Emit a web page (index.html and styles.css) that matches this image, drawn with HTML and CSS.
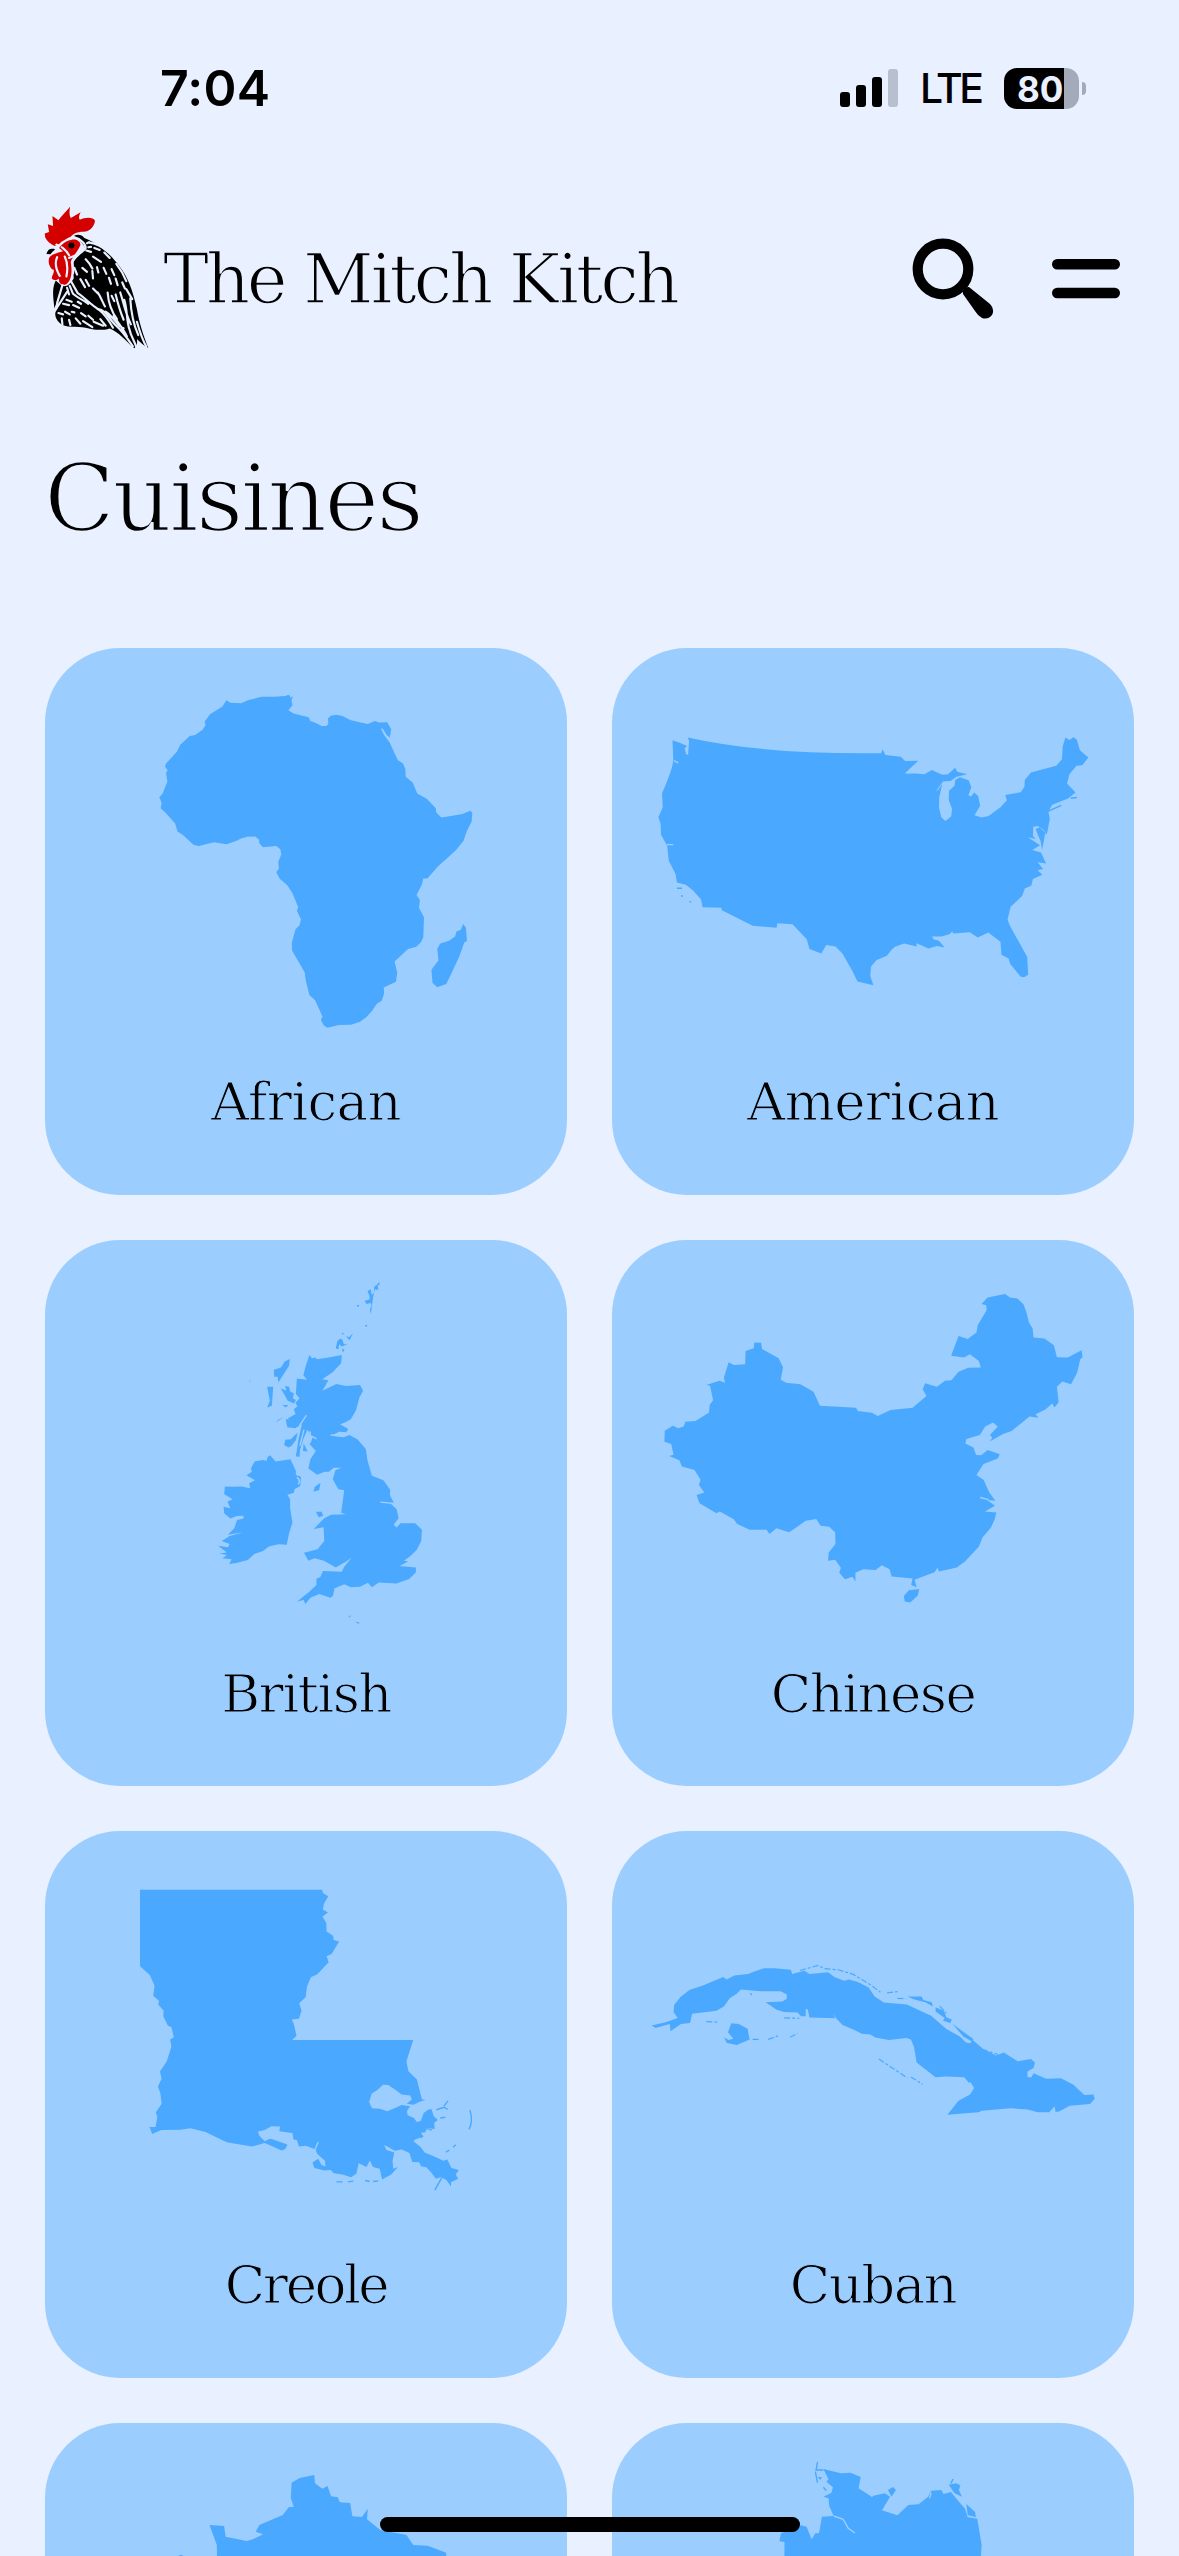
FILE: index.html
```html
<!DOCTYPE html>
<html lang="en">
<head>
<meta charset="utf-8">
<title>The Mitch Kitch</title>
<link rel="stylesheet" href="styles.css">
</head>
<body>
<div class="status">
  <span class="time">7:04</span>
  <div class="indicators">
    <svg class="signal" viewBox="0 0 58 38"><rect y="23" width="10" height="15" rx="3"/><rect x="16" y="16" width="10" height="22" rx="3"/><rect x="32" y="8" width="10" height="30" rx="3"/><rect class="dim" x="48" width="10" height="38" rx="3"/></svg>
    <span class="network">LTE</span>
    <div class="battery"><span class="charge">80</span><span class="nub"></span></div>
  </div>
</div>
<header class="header">
  <a class="brand">
    <svg class="logo" viewBox="43 52 315 430">
      <path class="red" d="M75 172C60 166 52 158 46 146L45 135L58 130L54 107L70 112L68 82L86 95C94 82 108 70 121 54C119 68 118 78 123 88C132 84 142 76 153 71C148 80 146 87 150 93C164 86 190 83 196 96C194 112 184 124 168 129C148 130 134 132 124 144C112 150 96 158 88 166Z"/>
      <path class="red" d="M88 178C96 166 110 156 124 154C138 150 154 158 152 170C146 184 136 196 128 210C124 216 122 220 124 226C128 254 124 280 108 288C96 292 86 284 88 270C84 274 74 278 66 270C66 260 74 254 72 244C60 240 54 222 58 208C64 198 76 196 86 192L100 188Z"/>
      <path d="M50 196C54 184 60 178 76 182C70 188 66 192 62 197Z"/>
      <path d="M132 142C144 136 156 138 164 148C214 168 246 202 270 234C294 264 310 306 322 362C328 400 342 444 356 478C344 474 332 462 322 452C324 462 322 474 314 480C290 458 266 430 240 420C216 428 188 424 168 418C142 414 106 420 90 404C76 392 72 374 82 362C90 340 82 330 74 360C70 324 66 300 78 276L96 292C110 296 120 290 132 270L130 222C140 206 158 194 166 180C162 166 150 154 132 142Z"/>
      <circle cx="125" cy="171" r="9"/>
      <g class="feather">
        <path d="M128 144C150 150 168 164 168 178C162 190 140 196 130 216C126 224 132 238 130 254"/>
        <path d="M80 168L84 170M96 176C106 184 112 188 118 200M82 206C76 220 78 242 90 262M105 204C114 222 114 244 110 264"/>
        <path d="M162 174C154 194 132 204 118 208M172 164L178 161M176 176L184 175"/>
        <path d="M180 162C200 164 218 174 236 190M194 178L210 184M170 186L184 190M190 204L214 220M168 212C176 220 182 226 188 240M224 192L240 208M222 238L230 256M246 242L254 260M260 226C274 244 284 262 290 278M134 238L142 258M158 238L172 250M188 248L190 270M202 236L206 252M258 270L264 290M278 282L286 300M238 268L244 286M152 272L166 296M168 274L178 292"/>
        <path d="M124 278L144 314C166 328 184 350 208 364C228 380 240 400 250 418M120 292L130 316C148 332 158 332 176 346M112 298L118 318M98 290L82 344M112 310L76 366"/>
        <path d="M190 300L208 318M204 312C214 326 218 340 226 354M234 312C236 342 242 364 262 392M246 322L254 338M258 318C266 350 272 370 282 394M272 312C284 350 288 376 304 408M290 302L308 332M302 330C304 366 308 400 326 440M284 334C294 364 290 398 300 424C304 444 314 456 320 476"/>
        <path d="M204 362C228 362 236 392 262 414C280 430 292 448 310 474M228 370C254 386 260 412 282 420M252 382C268 408 280 420 292 444M322 400C330 428 338 454 350 474"/>
        <path d="M110 334L126 340M100 346L118 350M130 350L148 358M86 374L100 378M106 370L120 378M126 370L134 372M96 390L98 408M118 394L122 410M138 390L152 406M154 374L168 384M160 398L188 416M176 382L190 394M192 400L220 412M212 392L228 412M144 340L154 346"/>
      </g>
    </svg>
    <span class="name">The Mitch Kitch</span>
  </a>
  <div class="tools">
    <svg class="search" viewBox="0 0 82 82"><circle cx="31" cy="31" r="25.3"/><path d="M51 56Q50 49 57 49L78 66Q83 71 80 77Q76 82 70 80Q66 78 63 73Z"/></svg>
    <svg class="menu" viewBox="0 0 68 40"><rect width="68" height="10.5" rx="5.2"/><rect y="28.7" width="68" height="10.5" rx="5.2"/></svg>
  </div>
</header>
<h1 class="title">Cuisines</h1>
<main class="grid">
  <a class="card"><svg class="map" viewBox="0 22.4 1544 1176" preserveAspectRatio="none"><path d="M537 169L548 176L580 177L600 169L640 159L680 159L710 157L722 153L727 162L734 157L729 170L732 183L720 197L735 206L780 216L785 227L800 232L818 241L832 241L838 235L837 220L845 212L862 209L880 213L903 224L930 230L955 235L975 227L988 231L1012 230L1018 240L1024 250L1020 273L1010 265L998 247L994 249L1003 266L1020 288L1034 317L1044 337L1059 346L1066 362L1067 383L1088 400L1101 430L1130 445L1156 471L1157 482L1172 497L1205 492L1235 487L1258 478L1264 484L1262 508L1247 537L1238 562L1216 588L1195 606L1162 634L1131 668L1119 668L1115 684L1099 714L1109 728L1106 750L1121 776L1119 832L1112 846L1098 859L1074 865L1034 900L1042 932L1038 957L1002 973L1003 990L996 1010L981 1019L967 1039L950 1056L932 1069L905 1077L870 1078L835 1086L824 1079L816 1063L821 1055L799 1009L782 994L772 956L768 930L731 870L730 848L741 810L753 799L757 782L745 758L749 748L732 709L716 686L695 669L684 650L692 640L690 621L699 600L696 586L684 577L645 580L634 569L633 559L622 550L598 551L580 556L565 563L537 572L500 566L455 577L440 574L408 546L392 536L385 514L358 485L342 471L345 456L338 440L348 430L362 396L358 372L363 365L355 355L358 346L390 313L400 293L428 269L444 266L466 251L475 239L472 229L488 208L524 187Z"/><path d="M1237 795L1245 806L1248 843L1240 847L1226 885L1201 936L1187 963L1160 972L1146 960L1143 923L1164 897L1160 865L1169 850L1195 842L1213 830L1217 816L1230 811Z"/></svg><span class="label wide">African</span></a>
  <a class="card"><svg class="map" viewBox="21 22.4 1544 1176" preserveAspectRatio="none"><path d="M200 281L225 289L243 297L236 303L240 320L232 317L246 321L249 283L245 273Q470 321 817 317L821 306L830 322L875 327L888 339L927 338L887 374L920 374L945 376L967 364L998 377L1015 376L1036 358L1042 369L1072 376L1040 383L1022 395L1000 396L978 425L987 418L998 402L989 440L988 468L995 496L1007 507L1024 494L1027 473L1017 448L1018 422L1034 408L1036 392L1050 384L1076 393L1084 412L1075 435L1083 438L1092 427L1104 437L1110 464L1093 491L1114 497L1135 493L1170 468L1189 449L1184 434L1230 426L1241 411L1242 392L1260 371L1335 352L1352 334L1354 298L1362 273L1374 280L1386 272L1396 279L1405 309L1430 329L1412 351L1395 352L1374 376L1367 402L1392 427L1370 444L1323 461L1312 481L1316 501L1307 545L1299 533L1281 521L1267 523L1266 548L1274 557L1251 552L1287 575L1264 588L1290 595L1305 626L1280 622L1296 641L1280 645L1294 657L1266 669L1261 688L1242 696L1234 717L1200 747L1191 783L1198 800L1223 843L1249 887L1252 937L1240 944L1230 943L1199 907L1194 892L1173 881L1170 845L1134 819L1103 833L1079 818L1031 822L1027 816L1019 824L995 830L968 830L972 838L988 842L1005 861L982 857L957 864L922 849L922 858L885 850L858 859L848 867L834 884L804 896L787 914L785 940L794 967L747 956L732 927L702 877L682 858L655 854L640 878L605 865L597 838L555 796L510 793L508 806L437 800L346 757L344 750L289 748L284 726L260 701L239 685L213 679L209 655L189 618L184 576L166 545L165 515L158 496L171 469L169 429Q205 352 202 330Z"/><path class="cut" d="M892 374L954 334L943 345L973 349L930 370Z"/><path d="M1274 530L1285 524L1303 538L1293 588L1289 564Z"/><path class="line" d="M1310 480L1350 463M1378 443L1396 441"/><path class="hair" d="M183 573L202 573M204 338L217 344"/><path class="line" d="M213 695h15M225 717h6M250 733h5"/></svg><span class="label wide">American</span></a>
  <a class="card"><svg class="map" viewBox="0 14 1544 1176" preserveAspectRatio="none"><path d="M782 336L790 345L800 343L804 348L835 344L878 336L876 359L850 385L820 404L838 407L828 424L820 436L862 417L890 423L932 420L941 436L930 455L920 491L905 515L889 524L873 530L897 543L891 552L870 551L846 562L884 566L900 560L924 572L949 599L954 632L967 674L1001 687L1021 713L1020 728L1034 754L1020 750L1040 768L1046 793L1031 811L1040 819L1052 807L1095 807L1115 825L1113 857L1099 882L1082 898L1062 912L1074 914L1049 927L1097 931L1097 944L1077 963L1040 976L987 973L967 986L955 974L932 985L905 986L885 978L856 990L852 1010L844 1016L811 1005L785 1016L770 1033L765 1022L746 1026L780 1000L803 980L803 962L814 958L822 941L878 943L884 930L907 903L891 914L860 931L825 912L797 905L779 912L766 890L806 880L826 857L824 818L795 823L825 794L846 783L890 782L876 778L885 715L868 712L851 684L859 659L877 652L854 652L840 663L827 663L805 671L779 654L785 628L801 605L783 586L788 577L792 566L776 545L764 571L754 603L753 621L742 620L750 571L760 530L740 541L716 538L730 523L718 514L741 501L736 488L746 480L741 470L753 457L742 445L745 402L775 405L764 393L772 364Z"/><path d="M666 617L682 634L726 628L742 660L742 672L757 677L755 703L738 712L736 722L717 727L725 740L725 765L732 805L722 835L715 867L690 866L662 872L645 885L619 893L600 910L569 918L545 921L552 908L525 905L538 896L516 892L538 889L512 870L541 874L546 865L523 857L546 843L587 832L541 839L560 821L568 798L587 794L587 786L568 787L548 794L530 779L528 761L548 765L540 746L555 740L530 726L532 704L555 705L582 704L607 709L604 695L621 687L596 673L612 663L609 653L620 634L644 630L656 632L658 622Z"/><path d="M724 347L722 366L690 413L688 397L678 397L677 377L698 371L709 354ZM657 425L675 425L671 478L657 483L665 464ZM697 429L714 436L710 423L722 425L725 438L736 443L733 457L742 462L737 472L718 464L710 450ZM684 524L708 509L689 518ZM712 515L735 519L741 533L716 537ZM748 552L742 575L729 591L720 595L707 588L711 573L727 572ZM765 583L777 606L763 605ZM815 694L811 714L794 719L798 705ZM801 775L818 775L823 786L810 790ZM990 131L989 141L984 140L986 154L977 152L973 161L968 191L964 221L961 210L966 196L962 190L952 194L945 185L960 180L960 172L954 157L964 152L966 168L973 161L974 144L980 141ZM874 290L880 294L884 306L895 306L878 312L870 306L868 320L860 318L865 296ZM879 273l7 5l-8 0zM891 282l8 4l12-11l-10 20l-6-6zM878 317l8 5l-5 7zM896 1070l9-6l-3 6zM917 1083l12 1l0 5zM702 475l18 2l-8 6zM604 408h3v3h-3zM923 196h6v4h-6zM947 252h6v4h-6z"/><path class="hair" d="M992 748L1034 752M773 505L754 532L748 560M766 545L754 590M784 550L786 572M803 571L790 564M845 560L884 563M745 678q12 10 4 20"/></svg><span class="label">British</span></a>
  <a class="card"><svg class="map" viewBox="21 14 1544 1176" preserveAspectRatio="none"><path d="M1184 165L1198 175L1220 178L1238 194L1247 216L1254 244L1265 262L1268 287L1300 290L1328 309L1337 342L1369 343L1410 323L1413 342L1406 348L1397 385L1379 418L1353 410L1337 425L1342 468L1330 483L1323 472L1304 488L1274 502L1282 512L1256 508L1203 549L1178 557L1138 578L1146 568L1139 560L1162 536L1148 525L1125 536L1109 560L1069 571L1066 584L1090 595L1098 616L1113 617L1132 602L1168 614L1162 626L1120 641L1099 672L1120 685L1137 721L1155 744L1130 742L1154 758L1124 774L1158 777L1153 796L1142 819L1117 847L1106 873L1065 914L1041 931L988 942L984 932L975 944L916 965L922 986L906 980L910 962L848 956L842 936L819 925L801 938L764 936L741 946L741 970L732 957L710 964L693 946L698 932L681 909L660 912L662 889L682 865L681 832L663 817L638 814L625 795L594 800L570 816L545 832L507 821L487 837L478 825L428 825L391 809L381 796L340 774L330 779L280 751L271 728L294 721L278 700L283 685L265 658L228 648L220 631L190 619L203 615L196 585L176 579L177 548L201 534L217 541L233 536L238 523L268 521L308 497L310 475L320 463L311 422L300 420L339 408L355 414L352 399L366 356L381 364L415 362L416 325L440 317L442 301L462 302L465 319L514 345L527 370L520 405L536 414L578 418L617 439L636 478L743 484L748 493L790 498L807 507L845 490L910 484L951 451L940 432L947 415L982 425L1006 408L1025 407L1046 383L1075 372L1112 371L1106 353L1080 334L1062 343L1024 338L1046 283L1073 291L1099 273L1103 252L1129 211L1128 197L1114 193L1132 175Z"/><path d="M899 995L930 991L925 1010L903 1029L887 1026L884 1011Z"/><path class="hair" d="M1110 735L1135 741"/></svg><span class="label">Chinese</span></a>
  <a class="card"><svg class="map" viewBox="0 16.5 1544 1176" preserveAspectRatio="none"><path d="M281 181H820L822 190L838 199L825 220L822 236L837 245L821 256L832 274L833 298L852 310L854 322L870 326L848 361L833 367L839 384L805 418L787 425L775 452L771 482L752 499L759 520L751 542L730 544L736 557L744 590L731 602H1089L1069 662L1075 689L1100 712L1115 768L1127 769L1110 774L1090 783L1070 780L1085 768L1080 757L1055 754L1035 740L1015 728L1000 727L985 740L966 752L959 775L967 793L990 794L1013 801L1055 784L1080 787L1071 800L1072 812L1091 820L1100 831L1112 828L1120 806L1133 797L1143 795L1150 815L1162 826L1151 834L1153 851L1130 848L1125 860L1112 862L1120 872L1095 880L1090 885L1111 901L1123 917L1155 929L1178 940L1190 936L1202 960L1224 966L1215 978L1222 990L1201 1000L1201 1012L1187 994L1172 985L1156 990L1142 972L1128 958L1112 955L1107 944L1086 943L1078 918L1055 908L1035 912L1003 895L1010 910L1033 917L1028 940L1030 962L1044 957L1024 978L997 992L990 962L970 957L961 939L951 957L928 947L921 976L905 986L880 978L854 975L845 966L826 967L797 960L791 945L808 934L818 952L830 956L828 940L805 920L800 908L772 898L751 900L745 882L735 880L732 862L693 857L695 844L670 843L650 854L630 858L634 870L650 885L664 878L675 880L717 894L711 907L700 911L650 890L612 900L541 889L528 884L475 859L430 849L402 853L344 854L317 865L309 845L327 845L332 818L328 804L345 780L341 750L334 732L345 710L340 690L360 662L374 620L370 600L381 594L374 566L363 561L350 535L351 520L335 502L337 492L320 478L324 450L310 420L281 395Z"/><path class="hair" d="M798 910L808 887"/><path class="line" d="M1158 797L1180 790L1191 796M1180 787L1192 772M1169 820L1184 818M1175 985L1153 1022M1186 916l10-6M1207 902l8-7M862 999L880 999M896 999L912 997M947 995L960 998M970 998L986 996M1257 798Q1267 830 1254 852M1130 850l15 4M1100 867l16 8"/></svg><span class="label tight">Creole</span></a>
  <a class="card"><svg class="map" viewBox="21 16.5 1544 1176" preserveAspectRatio="none"><path d="M438 411L470 401L500 401L550 405L554 417L590 408L605 417L660 412L680 426L708 436L722 432L750 440L780 455L798 480L825 497L893 502L965 534L1010 571L1050 592L1068 609L1082 611L1086 600L1119 627L1157 645L1180 637L1221 661L1260 655L1272 665L1268 680L1250 690L1250 705L1261 707L1268 695L1305 710L1349 709L1386 727L1418 756L1445 754L1449 766L1435 781L1375 786L1345 801L1333 803L1330 788L1314 804L1280 804L1250 796L1200 793L1115 800L1105 804L1013 811L1046 772L1080 754L1092 736L1081 719L1077 722L1063 706L1010 704L978 706L922 665L914 620L905 600L892 596L840 602L800 595L785 586L760 584L736 573L703 560L683 540L675 527L681 541L605 539L600 516L594 514L594 535L580 535L570 525L530 523L508 517L475 496L525 494L538 486L538 474L520 465L460 465L402 460L390 472L370 484L352 508L330 520L258 528L252 554L225 557L194 577L192 557L150 568L138 561L180 552L215 540L203 523L205 503L225 480L250 462L290 449L350 425L360 432L383 421L424 417Z"/><path d="M374 555L396 557L422 570L428 600L390 616L361 610L352 594L366 602L380 598L364 580ZM895 480L937 480L942 490L967 496L970 508L948 496L915 488ZM978 510L1003 520L1010 538L1026 544L1022 554L1000 548L1005 540L978 522ZM1028 556L1065 582L1090 599L1086 606L1060 592Z"/><path class="speckle" d="M577 407L630 393L650 402L690 405L735 418L782 445L815 468M835 470L865 466M865 485L890 486M990 507L1010 526M437 600L460 600M483 600L512 590M548 594L570 583M810 655L850 680L895 708M905 705L940 726M300 550L335 552M530 540L575 541M430 470L434 476M1115 628L1162 642"/></svg><span class="label">Cuban</span></a>
  <a class="card"><svg class="map" viewBox="20.5 69 712.4 1260" preserveAspectRatio="none"><path d="M388 225L389 250L399 266L406 258L411 289L420 292L423 307L437 309L440 349L453 351L461 326L460 358L478 390L514 405L523 435L543 437L568 458L567 600H256L255 435L245 375L265 378L267 410L296 423L305 417L318 403L308 395L313 375L345 345L353 322L360 320L356 295L357 248L368 234ZM202 468L206 464L210 468Z"/></svg></a>
  <a class="card"><svg class="map" viewBox="794.5 69 712.4 1260" preserveAspectRatio="none"><path d="M1083 207L1107 220L1120 218L1134 231L1131 265L1148 289L1167 280L1174 290L1163 331L1184 346L1199 315L1213 313L1226 290L1230 272L1244 270L1247 282L1257 276L1268 305L1276 325L1280 352L1293 356L1299 435L1294 600H1029L1030 426L1023 424L1025 400L1052 376L1060 380L1067 418L1072 400L1077 400L1081 350L1097 348L1091 318L1090 295L1083 290L1094 278L1096 262L1087 245L1090 238ZM1171 270L1178 261L1182 270L1176 290ZM1075 230L1081 232L1079 240ZM1254 254L1264 250L1270 256L1268 270L1272 290L1262 280ZM1278 312L1290 336L1291 352L1280 345Z"/><path class="line" d="M1075 186L1073 210L1083 210M1072 215L1075 248M1083 262L1087 272M1257 250L1260 237"/><path class="hair" d="M1097 348L1110 358L1117 385L1126 399M1141 273L1150 290M1230 278L1228 295"/></svg></a>
</main>
<div class="home"></div>
</body>
</html>
```
FILE: styles.css
```css
* { box-sizing: border-box; }
html { height: 2556px; overflow: hidden; }
body {
  margin: 0;
  width: 1179px;
  height: 2556px;
  overflow: hidden;
  position: relative;
  background: #e9f0ff;
  color: #000;
  font-family: "DejaVu Serif", serif;
}
svg { display: block; }

.status {
  display: flex;
  justify-content: space-between;
  align-items: center;
  height: 176px;
  padding: 0 93px 0 160px;
  font-family: Inter, sans-serif;
}
.time { font-size: 50px; font-weight: 600; letter-spacing: 0.2px; }
.indicators { display: flex; align-items: center; }
.signal { width: 58px; height: 38px; }
.signal .dim { fill: #b8c0d0; }
.network { margin-left: 22px; width: 84px; font-size: 41px; font-weight: 500; letter-spacing: -3.4px; }
.battery {
  position: relative;
  width: 75px;
  height: 41px;
  margin-right: 7px;
  border-radius: 13px;
  background: linear-gradient(90deg, #000 60px, #a3aaba 60px);
  color: #e9f0ff;
}
.charge { display: block; padding-left: 13px; line-height: 42px; font-size: 35px; font-weight: 700; }
.nub {
  position: absolute;
  right: -7px;
  top: 14px;
  width: 4px;
  height: 13px;
  border-radius: 0 4px 4px 0;
  background: #a3aaba;
}

.header {
  display: flex;
  justify-content: space-between;
  align-items: center;
  height: 206px;
  padding: 0 59px 0 44px;
}
.brand { display: flex; align-items: center; gap: 14px; }
.logo { width: 105px; height: 143px; margin-bottom: 3px; }
.logo .red { fill: #d40000; }
.feather { fill: none; stroke: #e9f0ff; stroke-width: 6.5; stroke-linecap: round; stroke-linejoin: round; }
.name {
  font-size: 69px;
  line-height: 80px;
  letter-spacing: -3.3px;
  white-space: nowrap;
  -webkit-text-stroke: 1.6px #e9f0ff;
}
.tools { display: flex; align-items: center; gap: 58px; }
.search { width: 82px; height: 82px; }
.search circle { fill: none; stroke: #000; stroke-width: 10.2; }
.menu { width: 68px; height: 40px; }

.title {
  margin: 0;
  height: 266px;
  padding: 62px 0 0 44px;
  font-size: 93px;
  line-height: 110px;
  font-weight: 400;
  letter-spacing: -3px;
  -webkit-text-stroke: 2.4px #e9f0ff;
}

.grid {
  display: grid;
  grid-template-columns: 522px 522px;
  grid-template-rows: 546.6px 546.6px 546.6px 133px;
  gap: 45px;
  height: 1908px;
  padding-left: 45px;
  overflow: hidden;
}
.card {
  display: flex;
  flex-direction: column;
  align-items: center;
  border-radius: 75px;
  background: #9bceff;
}
.card:nth-last-child(-n+2) {
  border-radius: 75px 75px 0 0;
  overflow: hidden;
}
.map { width: 522px; height: 420px; flex: none; fill: #4ba8ff; }
.map .cut { fill: #9bceff; }
.map .line, .map .speckle, .map .hair {
  fill: none;
  stroke: #4ba8ff;
  stroke-width: 1.4px;
  vector-effect: non-scaling-stroke;
}
.map .speckle { stroke-width: 1.2px; stroke-dasharray: 6 2 3 2; }
.map .hair { stroke: #9bceff; }
.label {
  font-size: 53px;
  line-height: 67px;
  letter-spacing: -1.6px;
  -webkit-text-stroke: 1.2px #9bceff;
}
.label.wide { letter-spacing: -0.7px; }
.label.tight { letter-spacing: -2.5px; }

.home {
  position: absolute;
  left: 380px;
  top: 2517px;
  width: 420px;
  height: 15px;
  border-radius: 8px;
  background: #000;
}
```
